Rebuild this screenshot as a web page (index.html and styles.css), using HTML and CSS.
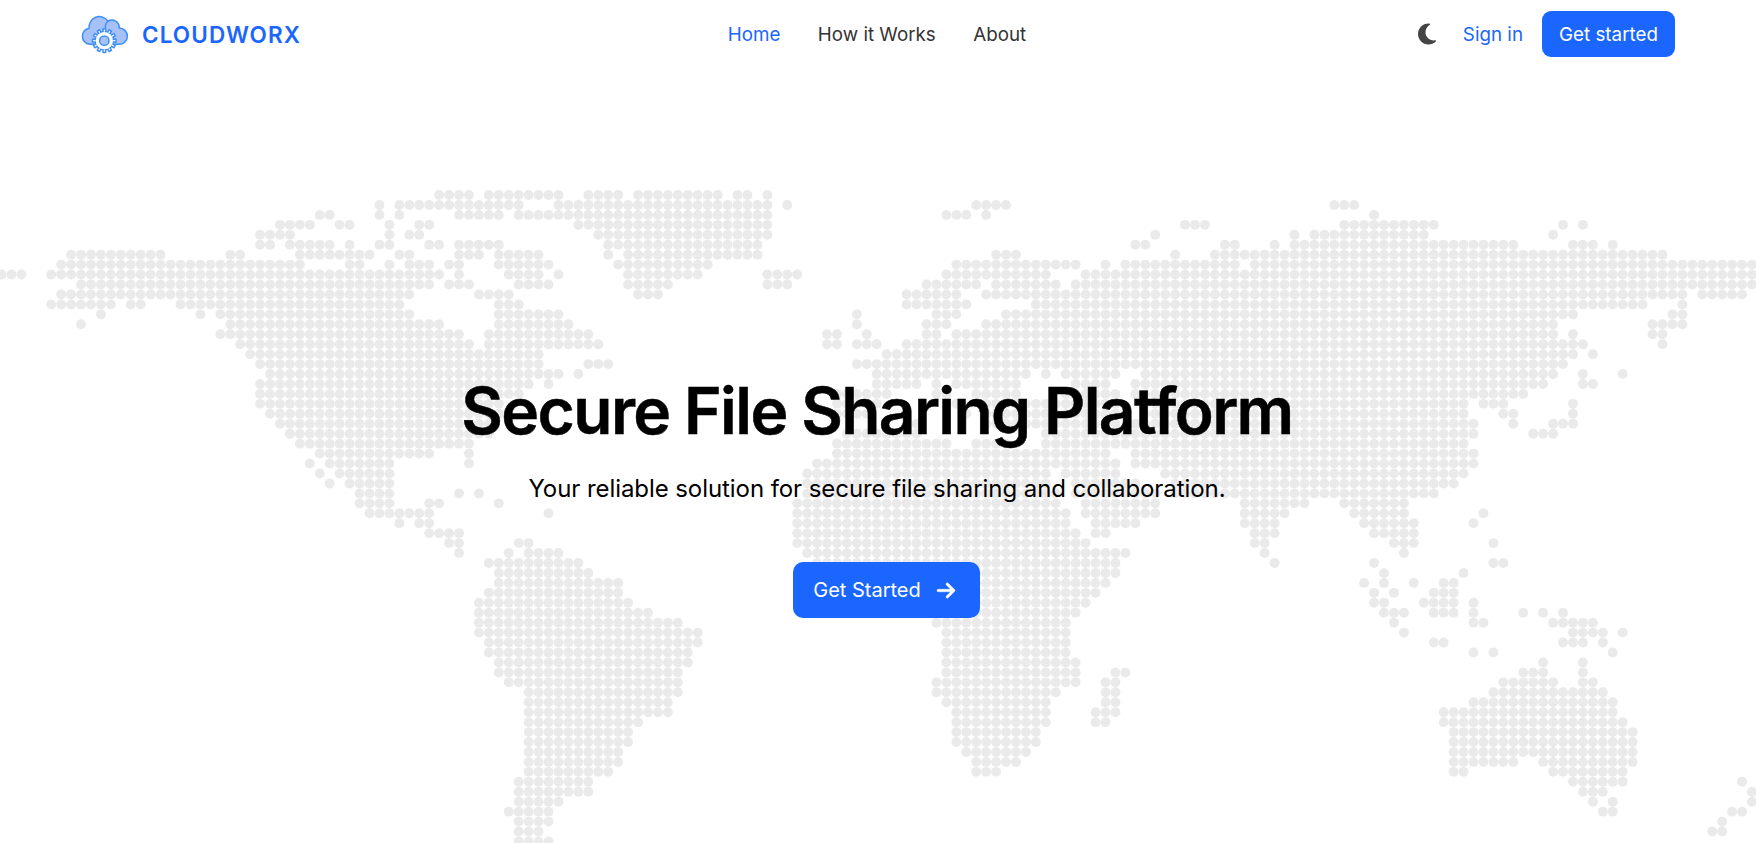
FILE: index.html
```html
<!DOCTYPE html>
<html lang="en">
<head>
<meta charset="utf-8">
<title>CLOUDWORX</title>
<link rel="stylesheet" href="styles.css">
</head>
<body>
<div class="page">
  <svg class="world" viewBox="0 0 1756 843" aria-hidden="true"><g id="dots"></g></svg>
  <header class="navbar">
    <a class="brand">
      <svg class="brand-icon" viewBox="32 40 150 120">
        <g fill="#a6c1f8" stroke="#3d8ff7" stroke-width="4.500" stroke-linecap="round" stroke-linejoin="round">
          <path d="M76 131H61A24.500 24.500 0 0 1 59.500 82.500A31 31 0 0 1 116 61.500A22 22 0 0 1 149.500 82A24.500 24.500 0 0 1 149.500 131H134Z"/>
          <path fill="none" d="M108 80A22 22 0 0 1 117 61"/>
        </g>
        <g transform="translate(105 120)" fill="#fff" stroke="#3d8ff7" stroke-width="4.500" stroke-linejoin="round">
          <circle r="27.500"/>
          <g id="teeth"></g>
          <circle r="26" stroke="none"/>
          <circle r="14" fill="#a6c1f8"/>
        </g>
      </svg>
      <span class="brand-name">CLOUDWORX</span>
    </a>
    <nav class="links">
      <a class="active">Home</a>
      <a>How it Works</a>
      <a>About</a>
    </nav>
    <div class="actions">
      <svg class="moon" viewBox="0 0 384 512"><path d="M223.500 32C100 32 0 132.300 0 256S100 480 223.500 480c60.600 0 115.500-24.200 155.800-63.400c5-4.900 6.300-12.500 3.100-18.700s-10.100-9.700-17-8.500c-9.800 1.700-19.800 2.600-30.100 2.600c-96.900 0-175.500-78.800-175.500-176c0-65.800 36-123.100 89.300-153.300c6.100-3.500 9.200-10.500 7.700-17.300s-7.300-11.900-14.300-12.500c-6.300-.5-12.600-.8-19-.8z"/></svg>
      <a class="signin">Sign in</a>
      <a class="btn btn-small">Get started</a>
    </div>
  </header>
  <main class="hero">
    <h1>Secure File Sharing Platform</h1>
    <p>Your reliable solution for secure file sharing and collaboration.</p>
    <a class="btn btn-large">Get Started
      <svg class="arrow" viewBox="0 0 448 512"><path d="M438.600 278.600c12.500-12.500 12.500-32.800 0-45.300l-160-160c-12.500-12.500-32.800-12.500-45.300 0s-12.500 32.800 0 45.300L338.800 224 32 224c-17.700 0-32 14.300-32 32s14.300 32 32 32l306.700 0L233.400 393.400c-12.500 12.500-12.500 32.800 0 45.300s32.800 12.500 45.300 0l160-160z"/></svg>
    </a>
  </main>
</div>
<script src="map.js"></script>
</body>
</html>
```
FILE: styles.css
```css
* { box-sizing: border-box; }
body {
  margin: 0;
  background: #fff;
  color: #000;
  font-family: Inter, "Liberation Sans", sans-serif;
}
.page {
  position: relative;
  height: 843px;
  overflow: hidden;
}
.world {
  position: absolute;
  inset: 0;
  width: 1756px;
  height: 843px;
  fill: #eaeaea;
}
.navbar {
  position: relative;
  display: grid;
  grid-template-columns: 1fr auto 1fr;
  align-items: center;
  height: 68px;
  padding: 0 81px 0 79px;
  font-size: 18.800px;
}
.brand { display: flex; align-items: center; gap: 12px; padding-left: 1px; }
.brand-icon { width: 50px; height: 40px; }
.brand-name {
  color: #1a66ff;
  font-size: 22.500px;
  font-weight: 600;
  letter-spacing: 1.100px;
}
.links { display: flex; gap: 37.500px; color: #333; }
.active, .signin { color: #1a66ff; }
.actions { display: flex; align-items: center; justify-content: flex-end; }
.moon { width: 18px; height: 24px; fill: #444; margin-right: 27px; }
.signin { margin-right: 19px; }
.btn {
  display: flex;
  align-items: center;
  justify-content: center;
  background: #1a66ff;
  color: #fff;
}
.btn-small { width: 133px; height: 46px; border-radius: 9px; }
.hero {
  position: relative;
  display: flex;
  flex-direction: column;
  align-items: center;
  padding: 304px 2px 0 0;
}
h1 {
  margin: 0;
  font-size: 64px;
  line-height: 78px;
  font-weight: 600;
  letter-spacing: -1.600px;
  -webkit-text-stroke: 0.500px #000;
}
p {
  margin: 24px 0 0;
  font-size: 24px;
  line-height: 30px;
  letter-spacing: -0.070px;
}
.btn-large {
  width: 187px;
  height: 56px;
  margin: 58px 0 0 19px;
  padding-right: 5px;
  border-radius: 10px;
  font-size: 20px;
  gap: 16px;
}
.arrow { width: 18px; height: 21px; fill: #fff; stroke: #fff; stroke-width: 10; overflow: visible; }
```
FILE: map.js
```js
// Land dots of the world map: one entry per row, listing column runs.
const rows = [
  "44-47 49-56 59-62 64-72 74-75 77",
  "38 40-52 56-77 79 98-101 134-136",
  "32-33 38 40 46-50 52-77 95-97 99 138",
  "28-31 34-35 39 42-43 58-77 119-121 135-144 157 159",
  "26-29 39 41-42 60-77 116 130 132-143 156",
  "26-27 29-33 35 38-39 43-44 46-50 61-76 114-115 123-124 128 130-152 158-160 162",
  "7-16 23-24 30-37 40-41 46-48 50-54 61 63-76 100-102 118 122-167",
  "6-30 35-36 39 41-43 45-46 50-55 62-71 96-108 111 113-124 126-176",
  "0-2 5-44 46 51-54 56 63-70 77-80 95-105 109-176",
  "8-43 45-47 52-55 63-67 77-79 93-98 100-106 108-176",
  "6-41 48-51 64-66 91-96 99-169 171-175",
  "5-11 13-14 18-40 50-52 91-97 104-165 169",
  "10 20 22-41 50-56 86 94-96 101-158 168-169",
  "8 23-44 50-57 86 93-95 99-156 166-169",
  "22-46 49-59 83-84 87 93-94 96-156 158 166-167",
  "24-47 49-60 83-84 86-88 91-159 167",
  "25-54 89-158 160",
  "26-54 59-61 86-157",
  "27-56 58 88-103 105 107-112 115-156 159 163",
  "26-53 55 88-92 94 96-102 108-111 114-155 159-160",
  "26-52 84-89 94-95 98-102 107-112 114-153",
  "26-50 84-88 96 99-112 115-147 149-151 158",
  "27-50 84-87 97 99-112 115-147 151-152 158",
  "28-49 92 99-112 114-148 152 156-158",
  "29-49 85-92 105-148 154-156",
  "30-47 84-95 98-101 105-147",
  "32-43 47 84-111 114-148",
  "31 33-39 47 82-112 114-148",
  "32 34-39 81-105 107-112 117-147",
  "33 35-39 81-105 108-114 118-146",
  "36-39 46 48 81-106 108-116 118-144",
  "36-39 43-44 50 80-106 109-116 125-131 135-141",
  "37-43 55 80-107 109-116 125-129 136-141 149",
  "40 42-43 80-107 110-114 125-128 137-142 148",
  "43-46 80-108 110-111 126-128 138-142",
  "45-46 52-53 80-109 126-127 140-142 150",
  "46 51 53-56 81-113 127 141",
  "49-58 82-112 128 138 150-151",
  "50-59 83-112 139 147",
  "50-62 84-111 137 139 142 145-146",
  "49-62 94-110 138 140 144-146",
  "48-63 94-109 138-139 143-146 148",
  "48-65 94-108 139-141 144-146 148 153 155 157",
  "48-68 94-107 140 148-149 156-160",
  "48-70 95-107 141 158-161 163",
  "49-70 95-107 144-145 157-159 161",
  "49-69 95-107 148 150 162",
  "50-69 95-108 155 159",
  "50-68 95-108 112-113 153-155 159",
  "51-68 94-108 111-112 151-156 159-160",
  "53-68 94-106 111-112 150-161",
  "53-67 95-105 111-112 148-162",
  "53-67 96-105 110-112 145-162",
  "53-64 96-105 110-111 145-163",
  "53-63 96-104 146-164",
  "53-63 96-104 146-164",
  "53-62 97-103 146-164",
  "53-62 98-102 146-152 155-164",
  "53-61 98-100 146-147 156-163",
  "52-59 158-163 175",
  "52-59 159-161 176",
  "52-56 160 162 176",
  "51-55 161-162 174-175",
  "52-55 173",
  "52-54 172-173",
  "52-55"
];
const NS = "http://www.w3.org/2000/svg";
const pitch = 9.946;

function add(parent, name, attrs) {
  const el = document.createElementNS(NS, name);
  for (const key in attrs) el.setAttribute(key, attrs[key]);
  parent.appendChild(el);
}

const dots = document.getElementById("dots");
rows.forEach((runs, r) => {
  for (const run of runs.split(" ")) {
    const [from, to = from] = run.split("-").map(Number);
    for (let c = from; c <= to; c++) {
      add(dots, "circle", { cx: (1.5 + pitch * c).toFixed(2), cy: (195 + pitch * r).toFixed(2), r: 4.95 });
    }
  }
});

// Gear teeth of the logo
const teeth = document.getElementById("teeth");
for (let i = 0; i < 12; i++) {
  add(teeth, "rect", { x: -4, y: -35.5, width: 8, height: 11, transform: `rotate(${i * 30})` });
}
```
